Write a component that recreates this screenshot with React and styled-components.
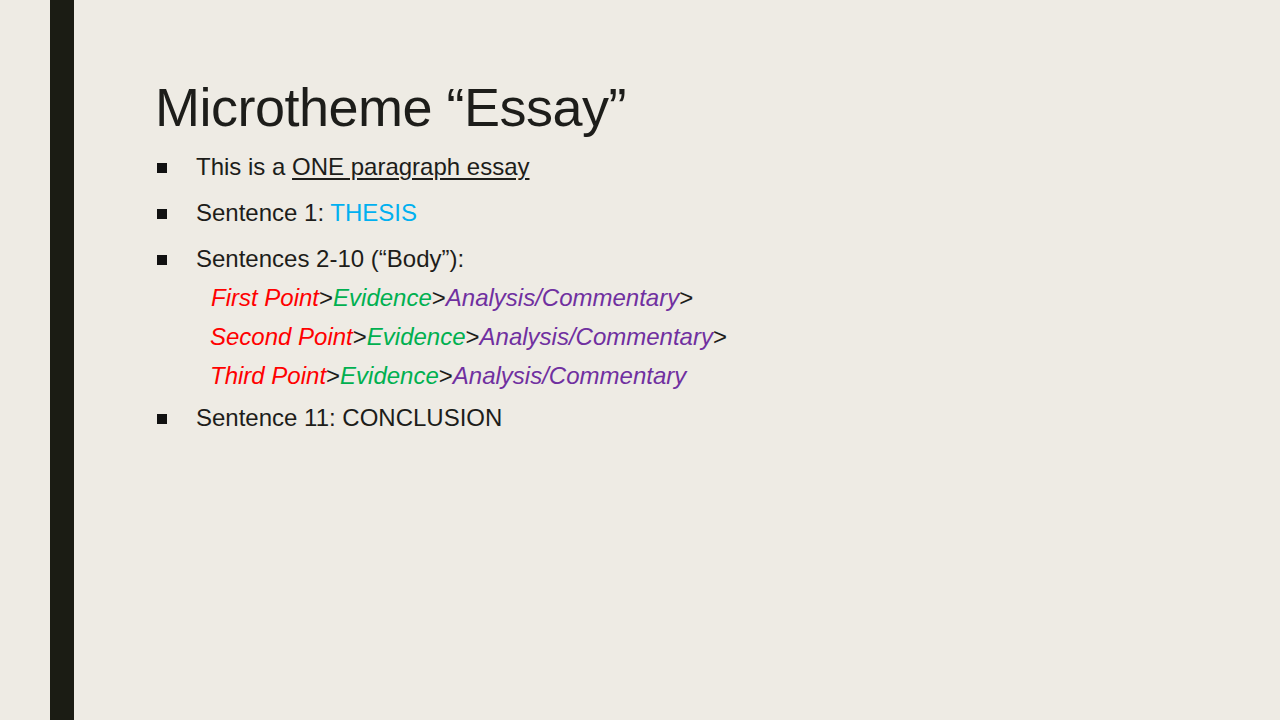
import styled, { createGlobalStyle } from 'styled-components';

const Global = createGlobalStyle`
  body { margin: 0; background: #eeebe4; }
`;

const Slide = styled.div`
  width: 1280px;
  height: 720px;
  background: #eeebe4;
  display: flex;
  font-family: "Liberation Sans", Arial, sans-serif;
  color: #1d1d1a;
  overflow: hidden;
`;

const SideBar = styled.div`
  width: 24px;
  margin-left: 50px;
  background: #1b1c14;
  flex-shrink: 0;
`;

const Content = styled.div`
  padding: 72px 0 0 81px;
  display: flex;
  flex-direction: column;
`;

const Title = styled.h1`
  margin: 0;
  font-weight: normal;
  font-size: 54px;
  line-height: 70px;
  letter-spacing: -0.5px;
`;

const List = styled.ul`
  list-style: none;
  margin: 10px 0 0;
  padding: 0;
`;

const Item = styled.li`
  display: flex;
  font-size: 24px;
  line-height: 30px;
  margin-bottom: 16px;
  &::before {
    content: '';
    width: 10px;
    height: 10px;
    background: #111;
    margin: 11px 29px 0 2px;
    flex-shrink: 0;
  }
`;

const Sub = styled.div`
  font-size: 24px;
  line-height: 39px;
  padding-left: ${p => p.$indent}px;
  &:first-child { margin-top: -2px; }
`;

const SubBlock = styled.div`
  margin: 6px 0 8px;
`;

const Tone = styled.span`
  color: ${p => p.$c};
  font-style: ${p => (p.$i ? 'italic' : 'normal')};
`;

const U = styled.span`
  text-decoration: underline;
  text-underline-offset: 3px;
`;

const RED = '#ff0000';
const GREEN = '#00b050';
const PURPLE = '#7030a0';

const Chain = ({ point, last, indent }) => (
  <Sub $indent={indent}>
    <Tone $c={RED} $i>{point}</Tone>&gt;<Tone $c={GREEN} $i>Evidence</Tone>&gt;
    <Tone $c={PURPLE} $i>Analysis/Commentary</Tone>
    {!last && '>'}
  </Sub>
);

export default function App() {
  return (
    <>
      <Global />
      <Slide>
        <SideBar />
        <Content>
          <Title>Microtheme “Essay”</Title>
          <List>
            <Item>
              <span>This is a <U>ONE paragraph essay</U></span>
            </Item>
            <Item>
              <span>Sentence 1: <Tone $c="#00b0f0">THESIS</Tone></span>
            </Item>
            <Item style={{ marginBottom: 0 }}>
              <span>Sentences 2-10 (“Body”):</span>
            </Item>
          </List>
          <SubBlock>
            <Chain point="First Point" indent={56} />
            <Chain point="Second Point" indent={55} />
            <Chain point="Third Point" indent={55} last />
          </SubBlock>
          <List style={{ marginTop: 0 }}>
            <Item>
              <span>Sentence 11: CONCLUSION</span>
            </Item>
          </List>
        </Content>
      </Slide>
    </>
  );
}
